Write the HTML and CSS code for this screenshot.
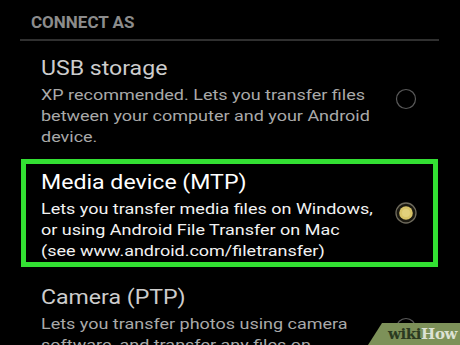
FILE: index.html
```html
<!DOCTYPE html>
<html>
<head>
<meta charset="utf-8">
<link rel="stylesheet" href="styles.css">
</head>
<body>
<div class="screen">
  <div class="header">CONNECT AS</div>
  <div class="divider"></div>

  <div class="item">
    <div class="text">
      <div class="title">USB storage</div>
      <div class="desc">XP recommended. Lets you transfer files<br>between your computer and your Android<br>device.</div>
    </div>
    <svg class="radio" width="22" height="22" viewBox="0 0 22 22"><circle cx="11" cy="11" r="9.5" fill="none" stroke="#5a5a5a" stroke-width="1.2"/></svg>
  </div>

  <div class="item selected">
    <div class="text">
      <div class="title">Media device (MTP)</div>
      <div class="desc">Lets you transfer media files on Windows,<br>or using Android File Transfer on Mac<br>(see www.android.com/filetransfer)</div>
    </div>
    <svg class="radio" width="22" height="22" viewBox="0 0 22 22"><circle cx="11" cy="11" r="10" fill="#1a1810" stroke="#6e6a5c" stroke-width="1.3"/><circle cx="11" cy="11" r="6.8" fill="#d9c468"/><circle cx="11" cy="11" r="4" fill="#e8d98a" opacity="0.6"/></svg>
  </div>

  <div class="item">
    <div class="text">
      <div class="title">Camera (PTP)</div>
      <div class="desc">Lets you transfer photos using camera<br>software, and transfer any files on<br>computers that don't support MTP</div>
    </div>
    <svg class="radio" width="22" height="22" viewBox="0 0 22 22"><circle cx="11" cy="11" r="9.5" fill="none" stroke="#5a5a5a" stroke-width="1.2"/></svg>
  </div>

  <div class="watermark"><span class="wiki">wiki</span><span class="how">How</span></div>
</div>
</body>
</html>
```

FILE: styles.css
```css
html, body {
  margin: 0;
  padding: 0;
  background: #000;
}
.screen {
  position: relative;
  width: 460px;
  height: 345px;
  overflow: hidden;
  background: #000;
  font-family: Roboto, "Noto Sans", sans-serif;
}
.header {
  padding: 12px 0 0 31px;
  font-size: 17px;
  line-height: 20px;
  font-weight: 700;
  color: #8c8c8c;
}
.divider {
  height: 2px;
  margin: 7px 21px 0 20px;
  background: #303030;
}
.item {
  display: flex;
  align-items: flex-start;
  padding: 0 43px 0 41px;
  margin-top: 15px;
}
.item .text {
  flex: 1;
  min-width: 0;
}
.title {
  font-size: 20px;
  line-height: 24px;
  color: #cdcdcd;
  margin-bottom: 5px;
  white-space: nowrap;
  transform: scaleX(1.155);
  transform-origin: 0 0;
}
.desc {
  font-size: 15.5px;
  line-height: 21px;
  color: #a9a9a9;
  white-space: nowrap;
  transform: scaleX(1.16);
  transform-origin: 0 0;
}
.radio {
  flex: none;
  margin-top: 32px;
}
.item.selected {
  margin: 11px 22px 0 21px;
  border: 5px solid #33e033;
  padding: 6px 16px 0 15px;
}
.item.selected .title {
  color: #ffffff;
}
.item.selected .desc {
  color: #f2f2f2;
}
.item.selected + .item {
  margin-top: 18px;
}
.watermark {
  position: absolute;
  left: 368px;
  top: 323px;
  width: 92px;
  height: 22px;
  background: #7d9159;
  clip-path: polygon(14px 0, 100% 0, 100% 100%, 0 100%);
  box-sizing: border-box;
  padding-left: 20px;
  font-family: "DejaVu Serif", "Liberation Serif", serif;
  font-weight: 700;
  font-size: 15px;
  line-height: 22px;
  letter-spacing: -0.4px;
  white-space: nowrap;
}
.wiki {
  color: #2b3a20;
}
.how {
  color: #dde2d4;
}
```
